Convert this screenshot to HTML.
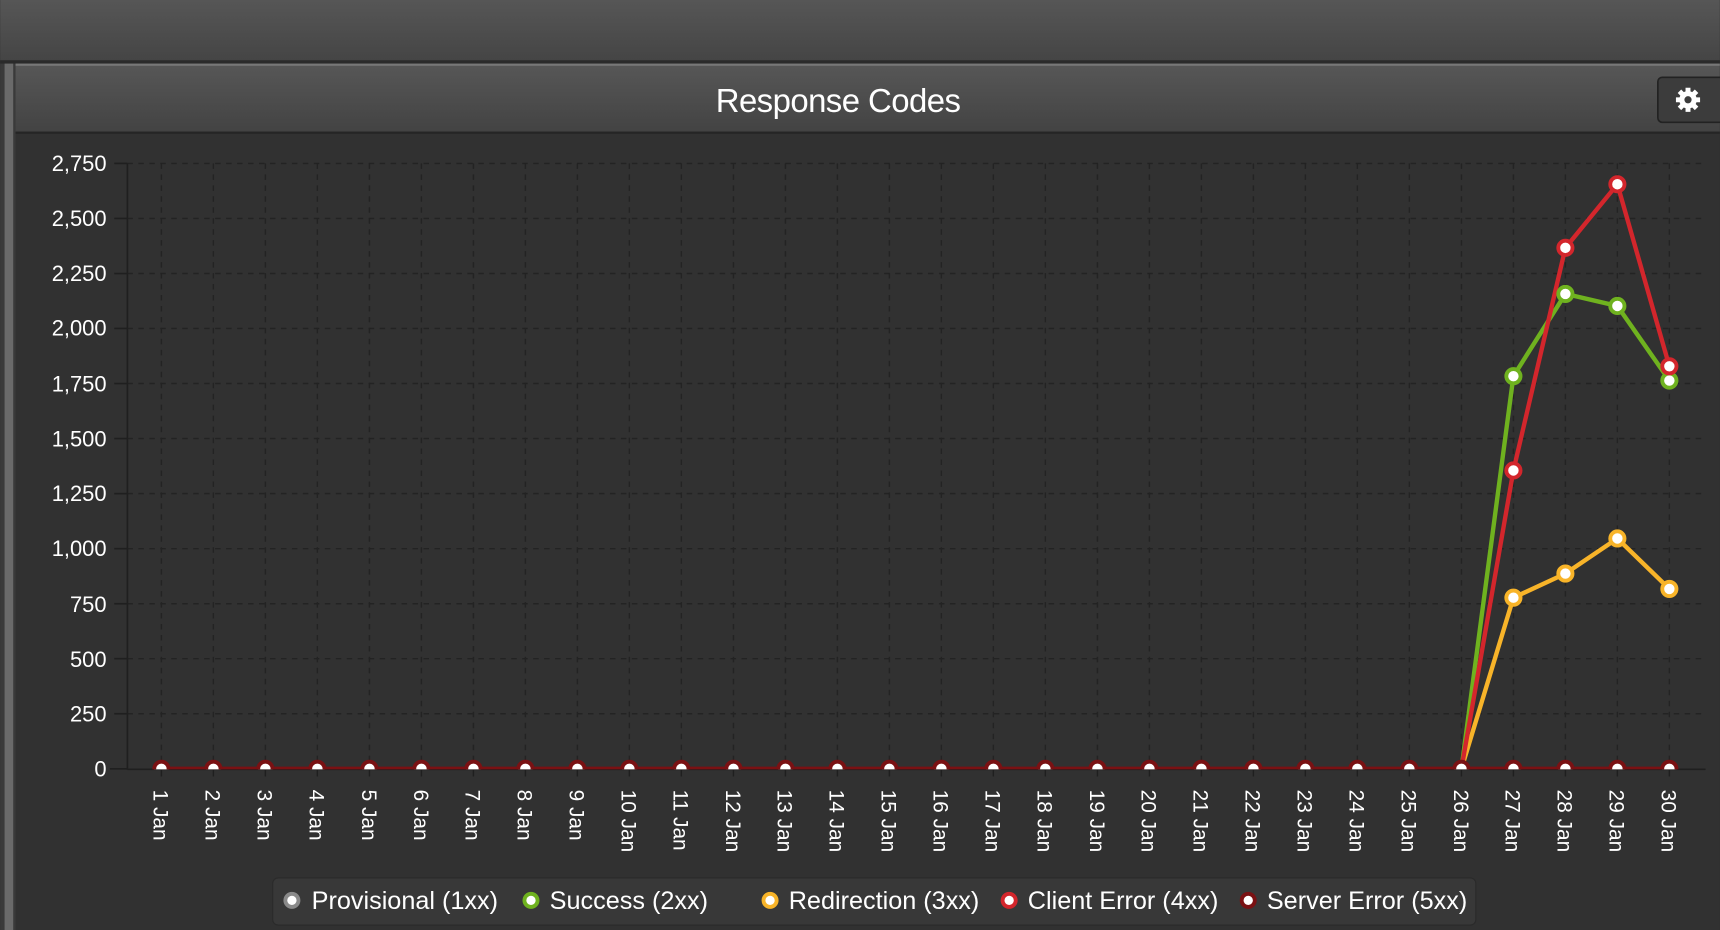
<!DOCTYPE html>
<html><head><meta charset="utf-8"><style>
html,body{margin:0;padding:0;background:#313131;overflow:hidden}
svg{display:block}
text{font-family:"Liberation Sans",sans-serif;fill:#fff}
</style></head><body>
<svg width="1720" height="930" viewBox="0 0 1568 848" xmlns="http://www.w3.org/2000/svg">
<defs>
<linearGradient id="tb" x1="0" y1="0" x2="0" y2="1"><stop offset="0" stop-color="#565656"/><stop offset="1" stop-color="#454545"/></linearGradient>
<linearGradient id="hd" x1="0" y1="0" x2="0" y2="1"><stop offset="0" stop-color="#575757"/><stop offset="1" stop-color="#434343"/></linearGradient>
<clipPath id="cp"><rect x="100" y="100" width="1468" height="601.5"/></clipPath>
</defs>
<rect width="1568" height="848" fill="#313131"/>
<rect width="1568" height="55" fill="url(#tb)"/>
<rect y="55" width="1568" height="3" fill="#2a2a2a"/>
<rect x="0" y="58" width="4" height="790" fill="#3a3a3a"/>
<rect x="4" y="58" width="8" height="790" fill="#6a6a6a"/>
<rect x="12" y="58" width="2" height="790" fill="#3a3a3a"/>
<rect x="14" y="58" width="1554" height="62" fill="url(#hd)"/>
<rect x="14" y="58" width="1554" height="2" fill="#777"/>
<rect x="14" y="120" width="1554" height="2" fill="#252525"/>
<text x="764" y="102" font-size="30" text-anchor="middle" letter-spacing="-0.5">Response Codes</text>
<rect x="1511.5" y="70.5" width="60" height="41" rx="4" fill="#3c3c3c" stroke="#222" stroke-width="1.5"/>
<g transform="translate(1539,91)" fill="#fff">
<circle r="8" fill="#fff"/>
<g stroke="#fff" stroke-width="4.5"><line x1="0" y1="-11" x2="0" y2="11"/><line x1="-11" y1="0" x2="11" y2="0"/><line x1="-7.8" y1="-7.8" x2="7.8" y2="7.8"/><line x1="-7.8" y1="7.8" x2="7.8" y2="-7.8"/></g>
<circle r="3.3" fill="#3c3c3c"/>
</g>
<!-- grid -->
<g stroke="#232323" stroke-width="1.3" stroke-dasharray="5,5">
<line x1="116" y1="149" x2="1555" y2="149"/><line x1="116" y1="199.2" x2="1555" y2="199.2"/><line x1="116" y1="249.4" x2="1555" y2="249.4"/><line x1="116" y1="299.5" x2="1555" y2="299.5"/><line x1="116" y1="349.7" x2="1555" y2="349.7"/><line x1="116" y1="399.9" x2="1555" y2="399.9"/><line x1="116" y1="450.1" x2="1555" y2="450.1"/><line x1="116" y1="500.3" x2="1555" y2="500.3"/><line x1="116" y1="550.5" x2="1555" y2="550.5"/><line x1="116" y1="600.6" x2="1555" y2="600.6"/><line x1="116" y1="650.8" x2="1555" y2="650.8"/>
<line x1="147" y1="149" x2="147" y2="701"/><line x1="194.4" y1="149" x2="194.4" y2="701"/><line x1="241.8" y1="149" x2="241.8" y2="701"/><line x1="289.2" y1="149" x2="289.2" y2="701"/><line x1="336.7" y1="149" x2="336.7" y2="701"/><line x1="384.1" y1="149" x2="384.1" y2="701"/><line x1="431.5" y1="149" x2="431.5" y2="701"/><line x1="478.9" y1="149" x2="478.9" y2="701"/><line x1="526.3" y1="149" x2="526.3" y2="701"/><line x1="573.7" y1="149" x2="573.7" y2="701"/><line x1="621.1" y1="149" x2="621.1" y2="701"/><line x1="668.6" y1="149" x2="668.6" y2="701"/><line x1="716" y1="149" x2="716" y2="701"/><line x1="763.4" y1="149" x2="763.4" y2="701"/><line x1="810.8" y1="149" x2="810.8" y2="701"/><line x1="858.2" y1="149" x2="858.2" y2="701"/><line x1="905.6" y1="149" x2="905.6" y2="701"/><line x1="953" y1="149" x2="953" y2="701"/><line x1="1000.5" y1="149" x2="1000.5" y2="701"/><line x1="1047.9" y1="149" x2="1047.9" y2="701"/><line x1="1095.3" y1="149" x2="1095.3" y2="701"/><line x1="1142.7" y1="149" x2="1142.7" y2="701"/><line x1="1190.1" y1="149" x2="1190.1" y2="701"/><line x1="1237.5" y1="149" x2="1237.5" y2="701"/><line x1="1284.9" y1="149" x2="1284.9" y2="701"/><line x1="1332.4" y1="149" x2="1332.4" y2="701"/><line x1="1379.8" y1="149" x2="1379.8" y2="701"/><line x1="1427.2" y1="149" x2="1427.2" y2="701"/><line x1="1474.6" y1="149" x2="1474.6" y2="701"/><line x1="1522" y1="149" x2="1522" y2="701"/>
</g>
<!-- axes -->
<g stroke="#1f1f1f" stroke-width="1.5">
<line x1="116" y1="149" x2="116" y2="702"/>
<line x1="116" y1="701.5" x2="1555" y2="701.5"/>
<line x1="104" y1="149" x2="116" y2="149"/><line x1="104" y1="199.2" x2="116" y2="199.2"/><line x1="104" y1="249.4" x2="116" y2="249.4"/><line x1="104" y1="299.5" x2="116" y2="299.5"/><line x1="104" y1="349.7" x2="116" y2="349.7"/><line x1="104" y1="399.9" x2="116" y2="399.9"/><line x1="104" y1="450.1" x2="116" y2="450.1"/><line x1="104" y1="500.3" x2="116" y2="500.3"/><line x1="104" y1="550.5" x2="116" y2="550.5"/><line x1="104" y1="600.6" x2="116" y2="600.6"/><line x1="104" y1="650.8" x2="116" y2="650.8"/><line x1="100" y1="701" x2="116" y2="701"/>
</g>
<g stroke="#1f1f1f" stroke-width="1.3" stroke-dasharray="6,5">
<line x1="147" y1="702" x2="147" y2="712"/><line x1="194.4" y1="702" x2="194.4" y2="712"/><line x1="241.8" y1="702" x2="241.8" y2="712"/><line x1="289.2" y1="702" x2="289.2" y2="712"/><line x1="336.7" y1="702" x2="336.7" y2="712"/><line x1="384.1" y1="702" x2="384.1" y2="712"/><line x1="431.5" y1="702" x2="431.5" y2="712"/><line x1="478.9" y1="702" x2="478.9" y2="712"/><line x1="526.3" y1="702" x2="526.3" y2="712"/><line x1="573.7" y1="702" x2="573.7" y2="712"/><line x1="621.1" y1="702" x2="621.1" y2="712"/><line x1="668.6" y1="702" x2="668.6" y2="712"/><line x1="716" y1="702" x2="716" y2="712"/><line x1="763.4" y1="702" x2="763.4" y2="712"/><line x1="810.8" y1="702" x2="810.8" y2="712"/><line x1="858.2" y1="702" x2="858.2" y2="712"/><line x1="905.6" y1="702" x2="905.6" y2="712"/><line x1="953" y1="702" x2="953" y2="712"/><line x1="1000.5" y1="702" x2="1000.5" y2="712"/><line x1="1047.9" y1="702" x2="1047.9" y2="712"/><line x1="1095.3" y1="702" x2="1095.3" y2="712"/><line x1="1142.7" y1="702" x2="1142.7" y2="712"/><line x1="1190.1" y1="702" x2="1190.1" y2="712"/><line x1="1237.5" y1="702" x2="1237.5" y2="712"/><line x1="1284.9" y1="702" x2="1284.9" y2="712"/><line x1="1332.4" y1="702" x2="1332.4" y2="712"/><line x1="1379.8" y1="702" x2="1379.8" y2="712"/><line x1="1427.2" y1="702" x2="1427.2" y2="712"/><line x1="1474.6" y1="702" x2="1474.6" y2="712"/><line x1="1522" y1="702" x2="1522" y2="712"/>
</g>
<!-- y labels -->
<g font-size="20" text-anchor="end">
<text x="97" y="156">2,750</text><text x="97" y="206">2,500</text><text x="97" y="256">2,250</text><text x="97" y="306">2,000</text><text x="97" y="357">1,750</text><text x="97" y="407">1,500</text><text x="97" y="457">1,250</text><text x="97" y="507">1,000</text><text x="97" y="558">750</text><text x="97" y="608">500</text><text x="97" y="658">250</text><text x="97" y="708">0</text>
</g>
<!-- x labels -->
<g font-size="19">
<text transform="translate(140,720) rotate(90)">1 Jan</text><text transform="translate(187.4,720) rotate(90)">2 Jan</text><text transform="translate(234.8,720) rotate(90)">3 Jan</text><text transform="translate(282.2,720) rotate(90)">4 Jan</text><text transform="translate(329.7,720) rotate(90)">5 Jan</text><text transform="translate(377.1,720) rotate(90)">6 Jan</text><text transform="translate(424.5,720) rotate(90)">7 Jan</text><text transform="translate(471.9,720) rotate(90)">8 Jan</text><text transform="translate(519.3,720) rotate(90)">9 Jan</text><text transform="translate(566.7,720) rotate(90)">10 Jan</text><text transform="translate(614.1,720) rotate(90)">11 Jan</text><text transform="translate(661.6,720) rotate(90)">12 Jan</text><text transform="translate(709,720) rotate(90)">13 Jan</text><text transform="translate(756.4,720) rotate(90)">14 Jan</text><text transform="translate(803.8,720) rotate(90)">15 Jan</text><text transform="translate(851.2,720) rotate(90)">16 Jan</text><text transform="translate(898.6,720) rotate(90)">17 Jan</text><text transform="translate(946,720) rotate(90)">18 Jan</text><text transform="translate(993.5,720) rotate(90)">19 Jan</text><text transform="translate(1040.9,720) rotate(90)">20 Jan</text><text transform="translate(1088.3,720) rotate(90)">21 Jan</text><text transform="translate(1135.7,720) rotate(90)">22 Jan</text><text transform="translate(1183.1,720) rotate(90)">23 Jan</text><text transform="translate(1230.5,720) rotate(90)">24 Jan</text><text transform="translate(1277.9,720) rotate(90)">25 Jan</text><text transform="translate(1325.4,720) rotate(90)">26 Jan</text><text transform="translate(1372.8,720) rotate(90)">27 Jan</text><text transform="translate(1420.2,720) rotate(90)">28 Jan</text><text transform="translate(1467.6,720) rotate(90)">29 Jan</text><text transform="translate(1515,720) rotate(90)">30 Jan</text>
</g>
<!-- series -->
<g clip-path="url(#cp)" fill="#fff" stroke-width="4">
<polyline fill="none" stroke="#f8b429" points="1332.4,701 1379.8,545 1427.2,523 1474.6,491 1522,537"/>
<polyline fill="none" stroke="#6fb21f" points="1332.4,701 1379.8,343 1427.2,268 1474.6,279 1522,347"/>
<polyline fill="none" stroke="#d3262c" points="1332.4,701 1379.8,429 1427.2,226 1474.6,168 1522,334"/>
<line x1="147" y1="701" x2="1522" y2="701" stroke="#7a1113" stroke-width="4"/>
<g stroke="#f8b429" stroke-width="3.5"><circle cx="1379.8" cy="545" r="6.5"/><circle cx="1427.2" cy="523" r="6.5"/><circle cx="1474.6" cy="491" r="6.5"/><circle cx="1522" cy="537" r="6.5"/></g>
<g stroke="#6fb21f" stroke-width="3.5"><circle cx="1379.8" cy="343" r="6.5"/><circle cx="1427.2" cy="268" r="6.5"/><circle cx="1474.6" cy="279" r="6.5"/><circle cx="1522" cy="347" r="6.5"/></g>
<g stroke="#d3262c" stroke-width="3.5"><circle cx="1379.8" cy="429" r="6.5"/><circle cx="1427.2" cy="226" r="6.5"/><circle cx="1474.6" cy="168" r="6.5"/><circle cx="1522" cy="334" r="6.5"/></g>
<g stroke="#7a1113" stroke-width="3.5">
<circle cx="147" cy="701" r="6.5"/><circle cx="194.4" cy="701" r="6.5"/><circle cx="241.8" cy="701" r="6.5"/><circle cx="289.2" cy="701" r="6.5"/><circle cx="336.7" cy="701" r="6.5"/><circle cx="384.1" cy="701" r="6.5"/><circle cx="431.5" cy="701" r="6.5"/><circle cx="478.9" cy="701" r="6.5"/><circle cx="526.3" cy="701" r="6.5"/><circle cx="573.7" cy="701" r="6.5"/><circle cx="621.1" cy="701" r="6.5"/><circle cx="668.6" cy="701" r="6.5"/><circle cx="716" cy="701" r="6.5"/><circle cx="763.4" cy="701" r="6.5"/><circle cx="810.8" cy="701" r="6.5"/><circle cx="858.2" cy="701" r="6.5"/><circle cx="905.6" cy="701" r="6.5"/><circle cx="953" cy="701" r="6.5"/><circle cx="1000.5" cy="701" r="6.5"/><circle cx="1047.9" cy="701" r="6.5"/><circle cx="1095.3" cy="701" r="6.5"/><circle cx="1142.7" cy="701" r="6.5"/><circle cx="1190.1" cy="701" r="6.5"/><circle cx="1237.5" cy="701" r="6.5"/><circle cx="1284.9" cy="701" r="6.5"/><circle cx="1332.4" cy="701" r="6.5"/><circle cx="1379.8" cy="701" r="6.5"/><circle cx="1427.2" cy="701" r="6.5"/><circle cx="1474.6" cy="701" r="6.5"/><circle cx="1522" cy="701" r="6.5"/>
</g>
</g>
<!-- legend -->
<rect x="248.5" y="800.5" width="1097" height="43" rx="5" fill="#383838" stroke="#2a2a2a"/>
<g stroke-width="3.5" fill="#fff">
<circle cx="266" cy="821" r="6" stroke="#8a8a8a"/>
<circle cx="484" cy="821" r="6" stroke="#6fb21f"/>
<circle cx="702" cy="821" r="6" stroke="#f8b429"/>
<circle cx="920" cy="821" r="6" stroke="#d3262c"/>
<circle cx="1138" cy="821" r="6" stroke="#7a1113"/>
</g>
<g font-size="23">
<text x="284" y="829">Provisional (1xx)</text>
<text x="501" y="829">Success (2xx)</text>
<text x="719" y="829">Redirection (3xx)</text>
<text x="937" y="829">Client Error (4xx)</text>
<text x="1155" y="829">Server Error (5xx)</text>
</g>
</svg>
</body></html>
